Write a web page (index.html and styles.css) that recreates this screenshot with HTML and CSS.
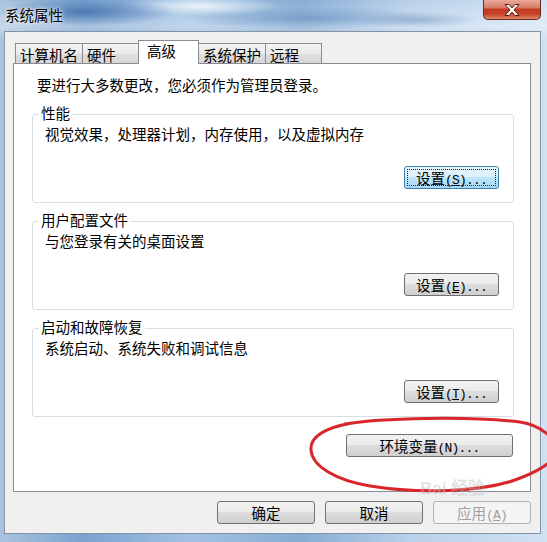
FILE: index.html
```html
<!DOCTYPE html>
<html lang="zh-CN">
<head>
    <meta charset="UTF-8">
    <title>系统属性</title>
    <link rel="stylesheet" href="styles.css">
</head>
<body>
    <div class="window">
        <div class="titlebar">
            <span class="title">系统属性</span>
            <button class="close" aria-label="关闭">
                <svg width="20" height="14" viewBox="0 0 20 14">
                    <path d="M3 1.5h4l3 3.5 3-3.5h4l-5 5.5 5 5.5h-4l-3-3.5-3 3.5h-4l5-5.5z" fill="#fff" stroke="#5a1a10" stroke-width="1" stroke-linejoin="round"/>
                </svg>
            </button>
        </div>
        <div class="client">
            <div class="tabs">
                <div class="tab">计算机名</div>
                <div class="tab">硬件</div>
                <div class="tab active">高级</div>
                <div class="tab">系统保护</div>
                <div class="tab">远程</div>
            </div>
            <div class="panel">
                <p class="intro">要进行大多数更改，您必须作为管理员登录。</p>
                <div class="group">
                    <span class="legend">性能</span>
                    <p class="desc">视觉效果，处理器计划，内存使用，以及虚拟内存</p>
                    <button class="btn focused">设置<span class="key">(<u>S</u>)...</span></button>
                </div>
                <div class="group">
                    <span class="legend">用户配置文件</span>
                    <p class="desc">与您登录有关的桌面设置</p>
                    <button class="btn">设置<span class="key">(<u>E</u>)...</span></button>
                </div>
                <div class="group">
                    <span class="legend">启动和故障恢复</span>
                    <p class="desc">系统启动、系统失败和调试信息</p>
                    <button class="btn">设置<span class="key">(<u>T</u>)...</span></button>
                </div>
                <button class="btn env">环境变量<span class="key">(N)...</span></button>
            </div>
            <div class="actions">
                <button class="btn">确定</button>
                <button class="btn">取消</button>
                <button class="btn" disabled>应用<span class="key">(<u>A</u>)</span></button>
            </div>
        </div>
        <svg class="annotation" width="547" height="542" viewBox="0 0 547 542">
            <path d="M345 424 C380 418 470 416 520 422 C540 425 556 438 556 450 C556 462 537 472 515 480 C480 492 420 494 370 486 C335 480 312 466 311 450 C310 437 324 428 352 423" fill="none" stroke="#d9262a" stroke-width="3" stroke-linecap="round"/>
        </svg>
        <div class="watermark">Bai 经验</div>
    </div>
</body>
</html>
```

FILE: styles.css
```css
body {
    margin: 0;
    font-family: "Noto Sans CJK SC", sans-serif;
    font-size: 14.5px;
    color: #000;
}
.window {
    position: relative;
    width: 547px;
    height: 542px;
    overflow: hidden;
    background:
        radial-gradient(ellipse 90px 14px at 85px 12px, rgba(50,100,165,0.7), transparent),
        radial-gradient(ellipse 80px 10px at 200px 6px, rgba(245,250,255,0.85), transparent),
        radial-gradient(ellipse 130px 12px at 310px 18px, rgba(70,120,180,0.45), transparent),
        radial-gradient(ellipse 60px 8px at 420px 20px, rgba(90,130,180,0.4), transparent),
        linear-gradient(to bottom, rgba(255,255,255,0) 0, rgba(255,255,255,0.35) 27px, rgba(255,255,255,0) 40px),
        linear-gradient(to right, #a9c3de, #7aa3cf 15%, #a3c2e2 35%, #86acd3 55%, #b9d1ea 75%, #d0e1f2);
}
.titlebar {
    display: flex;
    align-items: flex-start;
    height: 31px;
}
.title {
    padding-left: 5px;
    line-height: 30px;
    text-shadow: 0 0 6px #fff, 0 0 3px #fff;
}
.close {
    margin-left: auto;
    margin-right: 6px;
    width: 58px;
    height: 20px;
    padding: 0;
    border: 1px solid #6b2a20;
    border-top: none;
    border-radius: 0 0 5px 5px;
    background: linear-gradient(#e8ab9c, #d97b65 40%, #c0391f 50%, #c9462b 75%, #e0866a);
    display: flex;
    align-items: center;
    justify-content: center;
}
.client {
    box-sizing: border-box;
    height: 503px;
    margin: 0 6px 0 4px;
    padding: 8px 9px 0 8px;
    border: 1px solid #8493a5;
    background-color: #f0f0f0;
}
.tabs {
    display: flex;
    align-items: flex-end;
    height: 23px;
    padding-left: 2px;
}
.tab {
    box-sizing: border-box;
    height: 20px;
    min-width: 57px;
    padding: 1px 4px 0;
    line-height: 19px;
    border: 1px solid #898c95;
    border-bottom: none;
    background: linear-gradient(#f4f4f4, #ebebeb 50%, #dfdfdf 51%, #d6d6d6);
}
.tab + .tab {
    margin-left: -1px;
}
.tab.active {
    position: relative;
    z-index: 1;
    height: 24px;
    min-width: 61px;
    margin-bottom: -1px;
    padding: 0 8px;
    line-height: 20px;
    background: #fff;
}
.panel {
    box-sizing: border-box;
    height: 429px;
    padding: 11px 16px 0 18px;
    border: 1px solid #898c95;
    background-color: #fff;
    display: flex;
    flex-direction: column;
}
.intro {
    margin: 0 0 0 5px;
    line-height: 20px;
}
.group {
    position: relative;
    box-sizing: border-box;
    height: 89px;
    margin-top: 18px;
    padding: 9px 14px 13px 12px;
    border: 1px solid #d5dfe5;
    border-radius: 3px;
    display: flex;
    flex-direction: column;
}
.intro + .group {
    margin-top: 19px;
}
.legend {
    position: absolute;
    top: -12px;
    left: 6px;
    padding: 0 2px;
    line-height: 20px;
    background: #fff;
}
.desc {
    margin: 0;
    line-height: 20px;
}
.btn {
    box-sizing: border-box;
    width: 95px;
    height: 23px;
    padding: 0;
    font: inherit;
    line-height: 21px;
    color: #000;
    border: 1px solid #707070;
    border-radius: 3px;
    background: linear-gradient(#f2f2f2, #ebebeb 49%, #dddddd 50%, #cfcfcf);
}
.group .btn {
    margin-top: auto;
    align-self: flex-end;
}
.btn.focused {
    border-color: #3c7fb1;
    background: linear-gradient(#eaf6fd, #d9f0fc 49%, #bee6fd 50%, #a7d9f5);
    outline: 1px dotted #222;
    outline-offset: -4px;
}
.btn.env {
    width: 167px;
    margin: 17px 1px 0 0;
    align-self: flex-end;
}
.btn:disabled {
    color: #a0a0a0;
    border-color: #adb2b5;
    background: #f4f4f4;
}
.key {
    font-family: "Liberation Mono", monospace;
    font-size: 13px;
    letter-spacing: -0.8px;
}
.actions {
    display: flex;
    justify-content: flex-end;
    gap: 10px;
    margin-top: 9px;
}
.actions .btn {
    width: 98px;
}
.annotation {
    position: absolute;
    left: 0;
    top: 0;
    pointer-events: none;
}
.watermark {
    position: absolute;
    left: 420px;
    top: 479px;
    font-family: "Liberation Sans", sans-serif;
    font-size: 17px;
    line-height: 20px;
    font-weight: bold;
    color: rgba(190,190,190,0.45);
    pointer-events: none;
}
```
